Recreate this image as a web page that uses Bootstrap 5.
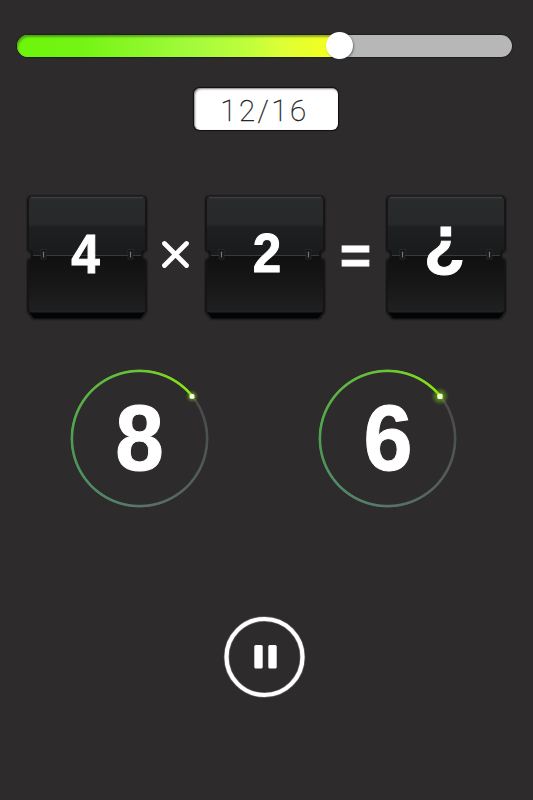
<!DOCTYPE html>
<html lang="en">
<head>
<meta charset="utf-8">
<meta name="viewport" content="width=device-width, initial-scale=1">
<title>Math game</title>
<link href="https://cdn.jsdelivr.net/npm/bootstrap@5.3.0/dist/css/bootstrap.min.css" rel="stylesheet">
<style>
body{background:#2d2b2c;font-family:"Liberation Sans",Arial,sans-serif;color:#fff}
.game{width:533px;height:800px;padding-top:35px}
.timer{width:495px;height:22px;margin-left:17px;border-radius:11px;background:#b7b7b7;overflow:visible;box-shadow:0 0 1px .5px #151515}
.timer-fill{height:22px;border-radius:11px 0 0 11px;background:linear-gradient(90deg,#6cf50a 0,#74f414 20%,#a4fb3c 55%,#bfff3a 72%,#ddff35 82%,#f8ff1c 100%);box-shadow:inset 1px 2px 2px rgba(30,70,10,.45)}
.knob{width:27px;height:27px;right:-14px;top:-3px;background:#fff;box-shadow:1px 1px 2px rgba(40,50,70,.5)}
.counter{width:144px;height:42px;margin:31px 0 0 194px;border-radius:6px;background:#fff;color:#111;font:100 29.5px/46px Roboto,sans-serif;letter-spacing:2.5px;-webkit-text-stroke:.35px #222;padding-right:3px;box-shadow:0 0 1px .5px #111,inset 1px 1px 2px rgba(0,0,0,.5)}
.equation{margin:64px 0 0 26px;height:128px}
.equation svg,.answers svg,.controls svg{display:block;flex:none}
.digit{font-family:"Liberation Sans",Arial,sans-serif;font-weight:700;fill:#fff;text-anchor:middle}
.heavy{stroke:#fff;stroke-width:1px}
.answers{margin-top:45px;padding-left:68px;gap:104px}
.choice{width:144px;height:144px}
.ring{left:2px;top:2px;width:139px;height:139px;border-radius:50%;background:conic-gradient(from 51deg,#484848 0,#4d5352 45deg,#56635f 90deg,#59756b 129deg,#4f8968 170deg,#4c9a55 210deg,#57ac48 245deg,#68c03a 300deg,#7bd524 335deg,#8cf008 360deg);-webkit-mask:radial-gradient(circle,transparent 65.8px,#000 66.8px,#000 68.5px,transparent 69.4px);mask:radial-gradient(circle,transparent 65.8px,#000 66.8px,#000 68.5px,transparent 69.4px)}
.controls{margin:103px 0 0 222px}
</style>
</head>
<body>
<svg width="0" height="0" class="position-absolute" aria-hidden="true">
<defs>
<linearGradient id="upper" x1="0" y1="0" x2="0" y2="1"><stop offset="0" stop-color="#2a2b2d"/><stop offset=".47" stop-color="#27282a"/><stop offset=".52" stop-color="#1e1f20"/><stop offset="1" stop-color="#1a1b1c"/></linearGradient>
<linearGradient id="lower" x1="0" y1="0" x2="0" y2="1"><stop offset="0" stop-color="#101010"/><stop offset=".5" stop-color="#171718"/><stop offset="1" stop-color="#1f2021"/></linearGradient>
<filter id="soft" x="-20%" y="-20%" width="140%" height="140%"><feGaussianBlur stdDeviation=".8"/></filter>
<radialGradient id="glow"><stop offset="0" stop-color="#b6ff20" stop-opacity=".95"/><stop offset=".4" stop-color="#7ed911" stop-opacity=".45"/><stop offset="1" stop-color="#6fcf10" stop-opacity="0"/></radialGradient>
<!-- flip tile: 118 wide, hinge at y 61 -->
<g id="tile">
<path d="M1.500 6q0-4 4-4h111q4 0 4 4v51l-4 2v5l4 2v52l-5 7H7l-5.500-7V66l4-2v-5l-4-2z" fill="#0a0a0a" filter="url(#soft)"/>
<path d="M3 6q0-3 3-3h110q3 0 3 3v50q-4 0-4 4v1H7v-1q0-4-4-4z" fill="url(#upper)"/>
<path d="M5 3.500h112" stroke="#3e3e3f" stroke-width="1.300"/>
<path d="M7 62h108v1q0 4 4 4v49q0 2-2 2H5q-2 0-2-2V67q4 0 4-4z" fill="url(#lower)"/>
<path d="M7 61.500h108" stroke="#393a3a"/>
<path d="M3.500 118.500l4.500 6h106l4.500-6z" fill="#040404"/>
<path d="M5 118h112" stroke="#292929" stroke-width=".8"/>
<g fill="#111" stroke="#303030" stroke-width=".7"><rect x="15" y="55.500" width="5" height="9.500"/><rect x="102" y="55.500" width="5" height="9.500"/></g>
<path d="M17.500 57.500v6M104.500 57.500v6" stroke="#787878" stroke-width="1.300"/>
</g>
</defs>
</svg>
<main class="game d-flex flex-column align-items-start">
  <div class="timer progress position-relative">
    <div class="timer-fill position-relative" style="width:65%"><span class="knob position-absolute rounded-circle"></span></div>
  </div>
  <div class="counter text-center">12/16</div>
  <section class="equation d-flex">
    <svg width="123" height="128"><use href="#tile"/><text class="digit heavy" x="59.500" y="78.500" font-size="56" textLength="28.500" lengthAdjust="spacingAndGlyphs">4</text></svg>
    <svg width="55" height="128" role="img" aria-label="times"><path d="M15.500 49.500l22 22M37.500 49.500l-22 22" fill="none" stroke="#fff" stroke-width="4.800" stroke-linecap="round"/></svg>
    <svg width="123" height="128"><use href="#tile"/><text class="digit heavy" x="63" y="77.500" font-size="55.500" textLength="28.500" lengthAdjust="spacingAndGlyphs">2</text></svg>
    <svg width="58" height="128"><text class="digit heavy" x="28.500" y="79.500" font-size="53">=</text></svg>
    <svg width="123" height="128"><use href="#tile"/><text class="digit heavy" x="59.500" y="68.700" font-size="68">¿</text></svg>
  </section>
  <section class="answers d-flex">
    <div class="choice position-relative"><div class="ring position-absolute"></div>
      <svg class="position-relative" width="144" height="144"><text class="digit heavy" x="71.500" y="102.500" font-size="93.500" textLength="48.500" lengthAdjust="spacingAndGlyphs">8</text><circle cx="124" cy="29.300" r="6.500" fill="url(#glow)"/><rect x="121.600" y="26.900" width="4.800" height="4.800" rx="1.500" fill="#fbffe9"/></svg></div>
    <div class="choice position-relative"><div class="ring position-absolute"></div>
      <svg class="position-relative" width="144" height="144"><text class="digit heavy" x="72" y="102.500" font-size="93.500" textLength="49" lengthAdjust="spacingAndGlyphs">6</text><circle cx="124" cy="29.300" r="9" fill="url(#glow)"/><rect x="121.400" y="26.700" width="5.200" height="5.200" rx="1.500" fill="#f4ffd0"/></svg></div>
  </section>
  <section class="controls">
    <svg width="86" height="86" role="img" aria-label="Pause"><circle cx="42.500" cy="43" r="38" fill="none" stroke="#888" stroke-width="5.600" opacity=".6"/><circle cx="42.500" cy="43" r="38" fill="none" stroke="#fff" stroke-width="4.200"/><rect x="32.300" y="31" width="8.400" height="23.500" rx="1.500" fill="#fff"/><rect x="46.300" y="31" width="8.400" height="23.500" rx="1.500" fill="#fff"/></svg>
  </section>
</main>
<script src="https://cdn.jsdelivr.net/npm/bootstrap@5.3.0/dist/js/bootstrap.bundle.min.js"></script>
</body>
</html>
